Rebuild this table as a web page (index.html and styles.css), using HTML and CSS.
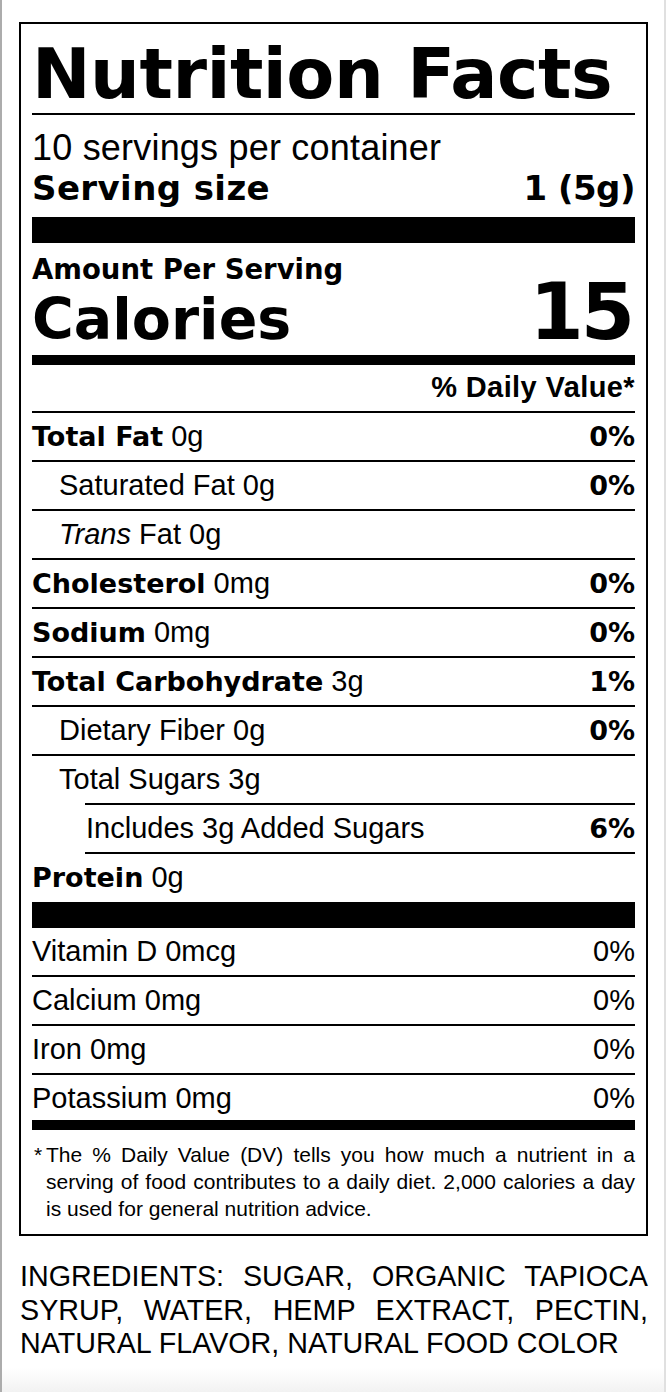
FILE: index.html
```html
<!DOCTYPE html>
<html lang="en">
<head>
<meta charset="utf-8">
<title>Nutrition Facts</title>
<link rel="stylesheet" href="styles.css">
</head>
<body>
<div class="page">
  <section class="label">
    <header class="head">
      <h1 class="title">Nutrition Facts</h1>
      <p class="servings">10 servings per container</p>
      <p class="serving-size"><span>Serving size</span><span class="size-val">1 (5g)</span></p>
    </header>

    <div class="calories">
      <p class="amount">Amount Per Serving</p>
      <p class="cal-row"><span class="cal-label">Calories</span><span class="cal-num">15</span></p>
    </div>

    <div class="dv-head">% Daily Value*</div>

    <div class="nutrients">
      <div class="row"><span><b>Total Fat</b> 0g</span><b>0%</b></div>
      <div class="row sub"><span>Saturated Fat 0g</span><b>0%</b></div>
      <div class="row sub"><span><i>Trans</i> Fat 0g</span></div>
      <div class="row"><span><b>Cholesterol</b> 0mg</span><b>0%</b></div>
      <div class="row"><span><b>Sodium</b> 0mg</span><b>0%</b></div>
      <div class="row"><span><b>Total Carbohydrate</b> 3g</span><b>1%</b></div>
      <div class="row sub"><span>Dietary Fiber 0g</span><b>0%</b></div>
      <div class="row sub no-rule"><span>Total Sugars 3g</span></div>
      <div class="row added"><span>Includes 3g Added Sugars</span><b>6%</b></div>
      <div class="row last"><span><b>Protein</b> 0g</span></div>
    </div>

    <div class="vitamins">
      <div class="row"><span>Vitamin D 0mcg</span><span>0%</span></div>
      <div class="row"><span>Calcium 0mg</span><span>0%</span></div>
      <div class="row"><span>Iron 0mg</span><span>0%</span></div>
      <div class="row vit-last"><span>Potassium 0mg</span><span>0%</span></div>
    </div>

    <div class="footnote">
      <span class="star">*</span>
      <p class="note-text">
        <span class="jl">The % Daily Value (DV) tells you how much a nutrient in a</span>
        <span class="jl">serving of food contributes to a daily diet. 2,000 calories a day</span>
        <span class="ll">is used for general nutrition advice.</span>
      </p>
    </div>
  </section>

  <p class="ingredients">
    <span class="jl">INGREDIENTS: SUGAR, ORGANIC TAPIOCA</span>
    <span class="jl">SYRUP, WATER, HEMP EXTRACT, PECTIN,</span>
    <span class="ll">NATURAL FLAVOR, NATURAL FOOD COLOR</span>
  </p>
</div>
</body>
</html>
```

FILE: styles.css
```css
* { box-sizing: border-box; }

html, body {
  margin: 0;
  padding: 0;
  background: #fff;
}

.page {
  width: 666px;
  min-height: 1392px;
  padding-top: 22px;
  border-left: 2px solid #acacac;
  border-right: 2px solid #e0e0e0;
  background: linear-gradient(to bottom, #fff 0, #fff 1368px, #f2f2f2 1392px);
  font-family: "Liberation Sans", Arial, sans-serif;
  color: #000;
}

.label {
  width: 629px;
  margin-left: 17px;
  border: 2px solid #000;
  padding: 0 11px 12px;
}

/* header */
.head {
  padding-bottom: 9px;
  border-bottom: 26px solid #000;
}

.title {
  margin: 0;
  padding: 15px 0 4px;
  font-family: "DejaVu Sans", sans-serif;
  font-weight: bold;
  font-size: 70px;
  line-height: 70px;
  letter-spacing: -0.5px;
  border-bottom: 2px solid #000;
}

.servings {
  margin: 13px 0 0;
  font-size: 36px;
  line-height: 40px;
  letter-spacing: 0.2px;
}

.serving-size {
  display: flex;
  justify-content: space-between;
  margin: 0;
  font-family: "DejaVu Sans", sans-serif;
  font-weight: bold;
  font-size: 34px;
  line-height: 40px;
  letter-spacing: 0.4px;
}

.size-val {
  letter-spacing: -0.5px;
}

/* calories */
.calories {
  padding-top: 12px;
  padding-bottom: 12px;
  border-bottom: 10px solid #000;
  font-family: "DejaVu Sans", sans-serif;
  font-weight: bold;
}

.amount {
  margin: 0;
  font-size: 27.5px;
  line-height: 28px;
}

.cal-row {
  display: flex;
  justify-content: space-between;
  align-items: baseline;
  margin: 1px 0 0;
}

.cal-label {
  font-size: 57px;
  line-height: 48px;
}

.cal-num {
  font-size: 78px;
  line-height: 56px;
  letter-spacing: -3px;
  margin-right: 3px;
}

/* daily value header */
.dv-head {
  text-align: right;
  font-weight: bold;
  font-size: 29px;
  line-height: 34px;
  letter-spacing: 0.4px;
  padding: 5px 0 7px;
  border-bottom: 2px solid #000;
}

/* rows */
.row {
  display: flex;
  justify-content: space-between;
  align-items: baseline;
  height: 49px;
  line-height: 47px;
  font-size: 29px;
  border-bottom: 2px solid #000;
  white-space: nowrap;
}

.row b {
  font-family: "DejaVu Sans", sans-serif;
  font-weight: bold;
  font-size: 27px;
}

.row i {
  font-style: italic;
}

.row.sub {
  padding-left: 27px;
}

.row.no-rule {
  height: 47px;
  border-bottom: 0;
}

.row.added {
  height: 51px;
  margin-left: 53px;
  padding-left: 1px;
  border-top: 2px solid #000;
}

.row.last {
  height: 48px;
  border-bottom: 0;
}

.nutrients {
  border-bottom: 26px solid #000;
}

.vitamins {
  border-bottom: 10px solid #000;
}

.row.vit-last {
  height: 45px;
  border-bottom: 0;
}

/* footnote */
.footnote {
  display: flex;
  padding-top: 11px;
  font-size: 21px;
  line-height: 27px;
}

.star {
  flex: 0 0 14px;
  padding-left: 2px;
}

.note-text {
  flex: 1;
  margin: 0;
}

.jl {
  display: block;
  text-align: justify;
  text-align-last: justify;
}

.ll {
  display: block;
}

/* ingredients */
.ingredients {
  width: 628px;
  margin: 24px 0 0 18px;
  font-size: 28.7px;
  line-height: 33.5px;
}
```
